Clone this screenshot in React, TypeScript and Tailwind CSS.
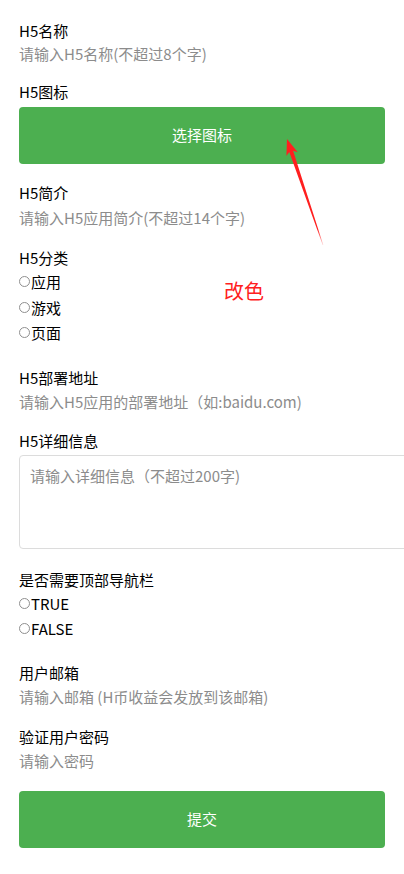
import React from 'react';

const font = { fontFamily: '"Noto Sans CJK SC", "Noto Sans", sans-serif' };

function Label({ children, className = '' }: { children: React.ReactNode; className?: string }) {
  return <div className={`h-[23px] leading-[23px] text-[15px] text-black ${className}`}>{children}</div>;
}

function TextInput({ placeholder, className = '' }: { placeholder: string; className?: string }) {
  return (
    <input
      className={`block w-full h-[23px] leading-[23px] text-[15px] text-black outline-none bg-transparent placeholder:text-[#8c8c8c] ${className}`}
      placeholder={placeholder}
    />
  );
}

function Radio({ name, label }: { name: string; label: string }) {
  return (
    <label className="flex items-center h-[25.5px] text-[15px] text-black">
      <input type="radio" name={name} className="peer sr-only" />
      <span className="w-[11px] h-[11px] rounded-full border border-[#8f8f8f] bg-white mr-px peer-checked:bg-[#4caf50]" />
      <span className="leading-[25px]">{label}</span>
    </label>
  );
}

function GreenButton({ children, className = '' }: { children: React.ReactNode; className?: string }) {
  return (
    <button className={`block w-full h-[57px] rounded-[4px] bg-[#4caf50] text-white text-[15px] ${className}`}>
      {children}
    </button>
  );
}

export default function App() {
  return (
    <div className="relative w-[404px] h-[874px] overflow-hidden bg-white" style={font}>
      <form className="px-[19px] pt-[19px]" onSubmit={(e) => e.preventDefault()}>
        <Label>H5名称</Label>
        <TextInput placeholder="请输入H5名称(不超过8个字)" />

        <Label className="mt-[15px]">H5图标</Label>
        <GreenButton className="mt-[4px]">选择图标</GreenButton>

        <Label className="mt-[17px]">H5简介</Label>
        <TextInput className="mt-[2px]" placeholder="请输入H5应用简介(不超过14个字)" />

        <Label className="mt-[17px]">H5分类</Label>
        <div className="flex flex-col">
          <Radio name="type" label="应用" />
          <Radio name="type" label="游戏" />
          <Radio name="type" label="页面" />
        </div>

        <Label className="mt-[20px]">H5部署地址</Label>
        <TextInput className="mt-px" placeholder="请输入H5应用的部署地址（如:baidu.com)" />

        <Label className="mt-[16px]">H5详细信息</Label>
        <textarea
          className="block mt-[3px] w-[392px] h-[94px] rounded-[4px] border border-[#dcdcdc] px-[10px] pt-[8px] pb-[9px] text-[15px] leading-[23px] outline-none resize-none placeholder:text-[#8c8c8c]"
          placeholder="请输入详细信息（不超过200字)"
        />

        <Label className="mt-[19px]">是否需要顶部导航栏</Label>
        <div className="flex flex-col">
          <Radio name="nav" label="TRUE" />
          <Radio name="nav" label="FALSE" />
        </div>

        <Label className="mt-[19px]">用户邮箱</Label>
        <TextInput className="mt-px" placeholder="请输入邮箱 (H币收益会发放到该邮箱)" />

        <Label className="mt-[17px]">验证用户密码</Label>
        <TextInput className="mt-px" placeholder="请输入密码" />

        <GreenButton className="mt-[19px]">提交</GreenButton>
      </form>

      {/* annotation overlay */}
      <svg className="absolute left-0 top-0 pointer-events-none" width="404" height="874">
        <defs>
          <linearGradient id="fade" x1="287" y1="139" x2="323" y2="245" gradientUnits="userSpaceOnUse">
            <stop offset="0" stopColor="#ff1f1f" />
            <stop offset="0.85" stopColor="#ff1f1f" />
            <stop offset="1" stopColor="#ff1f1f" stopOpacity="0.2" />
          </linearGradient>
        </defs>
        <polygon
          points="287,139 297.8,152.3 293.1,150.7 323.3,244.9 322.7,245.1 289.3,151.9 286.4,156.1"
          fill="url(#fade)"
        />
      </svg>
      <div className="absolute left-[224px] top-[277px] text-[20px] leading-[28px] text-[#ff2020]">改色</div>
    </div>
  );
}
